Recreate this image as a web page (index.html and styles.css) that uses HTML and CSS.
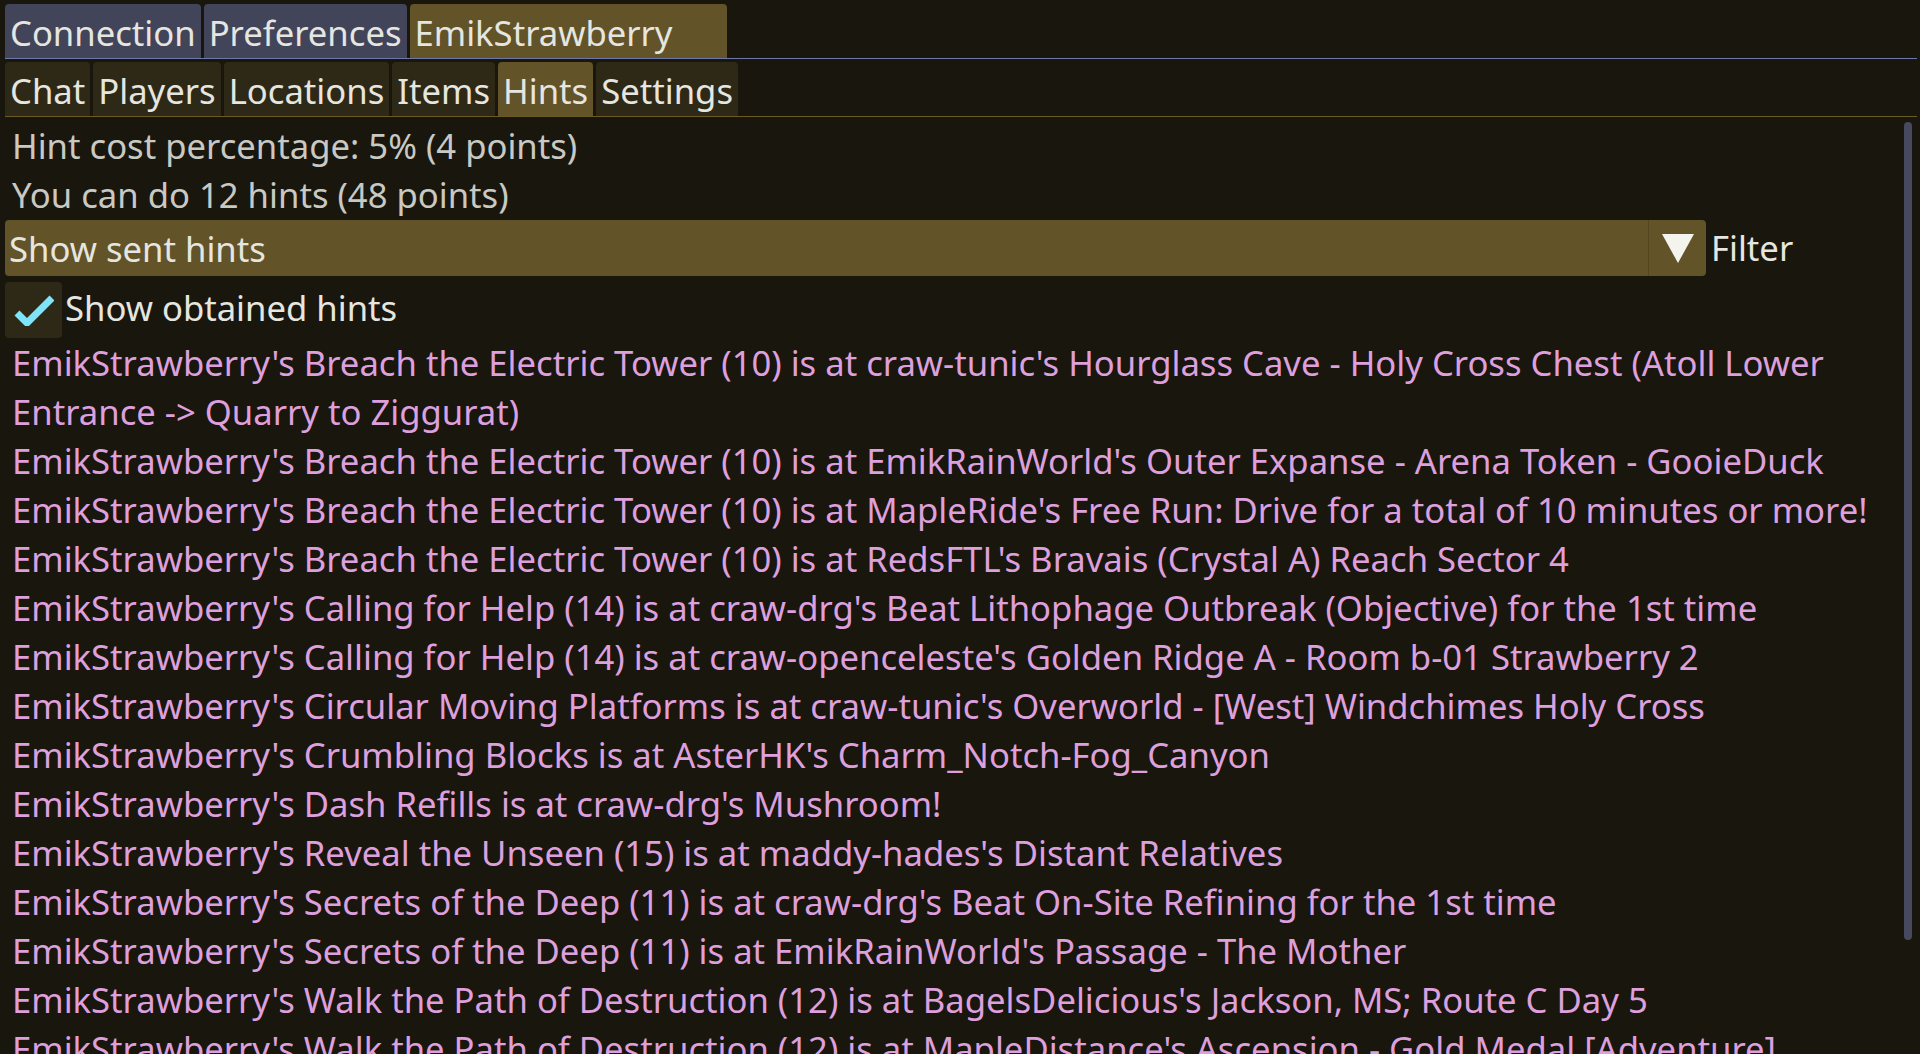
FILE: index.html
```html
<!DOCTYPE html>
<html>
<head>
<meta charset="utf-8">
<link rel="stylesheet" href="styles.css">
</head>
<body>
<div class="app">
  <div class="tabbar top">
    <div class="tab top-tab">Connection</div>
    <div class="tab top-tab">Preferences</div>
    <div class="tab top-tab active wide">EmikStrawberry</div>
  </div>
  <div class="tabbar sub">
    <div class="tab sub-tab">Chat</div>
    <div class="tab sub-tab">Players</div>
    <div class="tab sub-tab">Locations</div>
    <div class="tab sub-tab">Items</div>
    <div class="tab sub-tab active">Hints</div>
    <div class="tab sub-tab">Settings</div>
  </div>
  <div class="panel">
    <div class="content">
      <div class="label">Hint cost percentage: 5% (4 points)</div>
      <div class="label">You can do 12 hints (48 points)</div>
      <div class="filter-row">
        <div class="dropdown">
          <div class="dropdown-text">Show sent hints</div>
          <div class="dropdown-arrow"><span class="tri"></span></div>
        </div>
        <div class="filter-label">Filter</div>
      </div>
      <div class="check-row">
        <div class="check-box">
          <svg width="40" height="32" viewBox="0 0 40 32"><path d="M3 19 L13 29 L38 4" fill="none" stroke="#7fe3fa" stroke-width="7" stroke-linejoin="miter"/></svg>
        </div>
        <div class="check-label">Show obtained hints</div>
      </div>
      <div class="hints">
        <div class="hint">EmikStrawberry's Breach the Electric Tower (10) is at craw-tunic's Hourglass Cave - Holy Cross Chest (Atoll Lower Entrance -&gt; Quarry to Ziggurat)</div>
        <div class="hint">EmikStrawberry's Breach the Electric Tower (10) is at EmikRainWorld's Outer Expanse - Arena Token - GooieDuck</div>
        <div class="hint">EmikStrawberry's Breach the Electric Tower (10) is at MapleRide's Free Run: Drive for a total of 10 minutes or more!</div>
        <div class="hint">EmikStrawberry's Breach the Electric Tower (10) is at RedsFTL's Bravais (Crystal A) Reach Sector 4</div>
        <div class="hint">EmikStrawberry's Calling for Help (14) is at craw-drg's Beat Lithophage Outbreak (Objective) for the 1st time</div>
        <div class="hint">EmikStrawberry's Calling for Help (14) is at craw-openceleste's Golden Ridge A - Room b-01 Strawberry 2</div>
        <div class="hint">EmikStrawberry's Circular Moving Platforms is at craw-tunic's Overworld - [West] Windchimes Holy Cross</div>
        <div class="hint">EmikStrawberry's Crumbling Blocks is at AsterHK's Charm_Notch-Fog_Canyon</div>
        <div class="hint">EmikStrawberry's Dash Refills is at craw-drg's Mushroom!</div>
        <div class="hint">EmikStrawberry's Reveal the Unseen (15) is at maddy-hades's Distant Relatives</div>
        <div class="hint">EmikStrawberry's Secrets of the Deep (11) is at craw-drg's Beat On-Site Refining for the 1st time</div>
        <div class="hint">EmikStrawberry's Secrets of the Deep (11) is at EmikRainWorld's Passage - The Mother</div>
        <div class="hint">EmikStrawberry's Walk the Path of Destruction (12) is at BagelsDelicious's Jackson, MS; Route C Day 5</div>
        <div class="hint">EmikStrawberry's Walk the Path of Destruction (12) is at MapleDistance's Ascension - Gold Medal [Adventure]</div>
      </div>
    </div>
    <div class="scrollbar"><div class="grabber"></div></div>
  </div>
</div>
</body>
</html>
```
FILE: styles.css
```css
html, body {
  margin: 0;
  padding: 0;
  background: #18160d;
  height: 100%;
  overflow: hidden;
}
body {
  font-family: "Noto Sans", "Open Sans", sans-serif;
  font-size: 34.65px;
  color: #e6e6e0;
}
.app {
  padding: 4px 3px 0 5px;
  display: flex;
  flex-direction: column;
  height: 100%;
  box-sizing: border-box;
}
.tabbar {
  display: flex;
  gap: 3px;
  border-bottom: 1px solid #6d78a8;
}
.tabbar.sub {
  margin-top: 3px;
  border-bottom-color: #6b5a24;
}
.tab {
  height: 54px;
  line-height: 57px;
  padding: 0 5px 0 5px;
  border-radius: 4px 4px 0 0;
  white-space: nowrap;
}
.top-tab {
  background: #42445a;
}
.sub-tab {
  background: #2e2916;
}
.tab.active {
  background: #625329;
}
.tab.wide {
  padding-right: 54px;
}
.panel {
  flex: 1;
  display: flex;
  min-height: 0;
}
.content {
  flex: 1;
  display: flex;
  flex-direction: column;
  gap: 4px;
  padding-top: 3px;
  min-width: 0;
}
.label {
  height: 45px;
  line-height: 52px;
  padding-left: 7px;
  color: #c9c9c4;
}
.filter-row {
  display: flex;
  align-items: center;
  gap: 5px;
}
.dropdown {
  width: 1701px;
  height: 56px;
  background: #625329;
  border-radius: 4px;
  display: flex;
}
.dropdown-text {
  flex: 1;
  line-height: 58px;
  padding-left: 4px;
  border-right: 1px solid #54461f;
}
.dropdown-arrow {
  width: 57px;
  display: flex;
  align-items: center;
  justify-content: center;
}
.tri {
  width: 0;
  height: 0;
  border-left: 16px solid transparent;
  border-right: 16px solid transparent;
  border-top: 29px solid #f4f4ee;
}
.filter-label {
  line-height: 60px;
}
.check-row {
  display: flex;
  align-items: center;
  height: 56px;
}
.check-box {
  width: 57px;
  height: 56px;
  background: #2e2916;
  border-radius: 4px;
  display: flex;
  align-items: center;
  justify-content: center;
}
.check-label {
  padding-left: 3px;
  padding-bottom: 4px;
  line-height: 52px;
}
.hints {
  margin-top: -4px;
  padding-left: 7px;
  padding-right: 10px;
}
.hint {
  color: #dda0dd;
  line-height: 49px;
}
.scrollbar {
  width: 8px;
  padding-top: 5px;
  margin-right: 5px;
}
.grabber {
  width: 8px;
  height: 818px;
  background: #474a5f;
  border-radius: 4px;
}
```
